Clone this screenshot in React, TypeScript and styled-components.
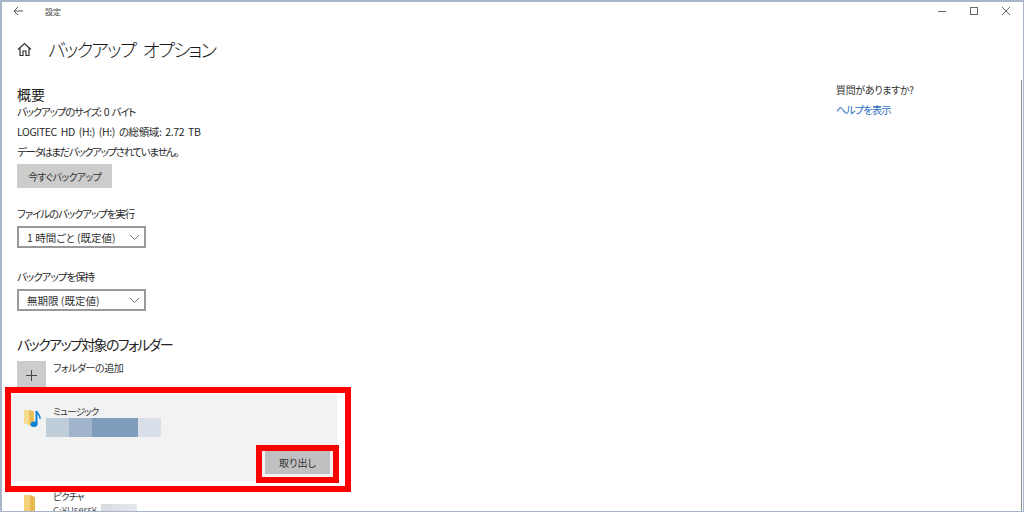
import React from 'react';
import styled, { createGlobalStyle } from 'styled-components';

const GlobalStyle = createGlobalStyle`
  html, body { margin: 0; padding: 0; background: #fff; }
  body {
    font-family: "Noto Sans CJK JP", "Open Sans", "Noto Sans", sans-serif;
    font-feature-settings: "palt";
    color: #222;
  }
  * { box-sizing: border-box; }
`;

const Window = styled.div`
  position: relative;
  width: 1024px;
  height: 512px;
  overflow: hidden;
  background: #fff;
  border: 1px solid #a9b6c9;
  border-left-width: 2px;
  border-top-width: 2px;
`;
const TitleBar = styled.div`
  display: flex;
  align-items: center;
  height: 18px;
  padding-left: 11px;
`;
const BackButton = styled.div`
  display: flex;
  width: 32px;
`;
const TitleText = styled.span`
  font-size: 8px;
  color: #444;
`;
const WindowButtons = styled.div`
  display: flex;
  gap: 20px;
  margin-left: auto;
  margin-right: 11px;
`;
const Body = styled.div`
  display: flex;
  justify-content: space-between;
`;
const Main = styled.div`
  width: 360px;
  padding: 13px 0 0 15px;
`;
const PageHeader = styled.div`
  display: flex;
  align-items: center;
  height: 32px;
  gap: 16px;
`;
const PageTitle = styled.h1`
  margin: 0;
  font-size: 18.6px;
  font-weight: 300;
  line-height: 32px;
  letter-spacing: -1.8px;
  word-spacing: 5px;
  color: #1a1a1a;
`;
const SectionTitle = styled.h2<{ $top: number; $spacing?: number }>`
  margin: ${(p) => p.$top}px 0 0;
  font-size: 14px;
  font-weight: 400;
  line-height: 20px;
  letter-spacing: ${(p) => p.$spacing ?? 0}px;
`;
const Line = styled.p<{ $top?: number; $spacing?: number }>`
  margin: ${(p) => p.$top ?? 0}px 0 0;
  font-size: 10.5px;
  line-height: 16px;
  letter-spacing: ${(p) => p.$spacing ?? 0}px;
  word-spacing: 2px;
  color: #2a2a2a;
`;
const ActionButton = styled.div`
  display: flex;
  align-items: center;
  justify-content: center;
  width: 95px;
  height: 24px;
  margin-top: 4px;
  background: #ccc;
  font-size: 10px;
  letter-spacing: -0.7px;
  color: #333;
`;
const Select = styled.div`
  display: flex;
  align-items: center;
  justify-content: space-between;
  width: 129px;
  height: 22px;
  margin-top: 4px;
  padding: 0 4px 0 8px;
  border: 2px solid #999;
  font-size: 10.5px;
  color: #333;
`;
const AddRow = styled.div`
  display: flex;
  gap: 7px;
  margin-top: 7px;
`;
const AddTile = styled.div`
  display: flex;
  align-items: center;
  justify-content: center;
  width: 29px;
  height: 29px;
  background: #ccc;
`;
const AddLabel = styled.span`
  font-size: 10px;
  line-height: 14px;
  letter-spacing: -0.5px;
  color: #333;
`;
const FolderCard = styled.div`
  position: relative;
  width: 326px;
  height: 86px;
  margin: 5px 0 0 -6px;
  background: #f2f2f2;
  padding: 9px 0 0 12px;
`;
const FolderRow = styled.div`
  display: flex;
  gap: 8px;
`;
const FolderIconBox = styled.div`
  flex: none;
  width: 22px;
  padding-top: 4px;
`;
const FolderName = styled.div`
  font-size: 9.5px;
  line-height: 14px;
  letter-spacing: -0.8px;
  color: #333;
`;
const BlurRow = styled.div`
  display: flex;
  height: 19px;
  margin-left: -7px;
`;
const BlurCell = styled.div<{ $w: number; $c: string }>`
  width: ${(p) => p.$w}px;
  background: ${(p) => p.$c};
`;
const RemoveButton = styled.div`
  position: absolute;
  right: 7px;
  bottom: 7px;
  display: flex;
  align-items: center;
  justify-content: center;
  width: 65px;
  height: 24px;
  background: #c0c0c0;
  font-size: 10px;
  color: #333;
`;
const NextRow = styled.div`
  display: flex;
  gap: 8px;
  margin: 8px 0 0 6px;
`;
const NextPath = styled.div`
  position: relative;
  font-size: 9.5px;
  line-height: 14px;
  color: #555;
  white-space: nowrap;
`;
const PathBlur = styled.div`
  position: absolute;
  left: 48px;
  top: 1px;
  width: 36px;
  height: 14px;
  background: linear-gradient(90deg, #d8dbe0, #e4e8ee);
`;
const Aside = styled.aside`
  width: 187px;
  padding-top: 62px;
`;
const HelpTitle = styled.div`
  font-size: 10px;
  line-height: 16px;
  letter-spacing: -0.3px;
  color: #333;
`;
const HelpLink = styled.div`
  margin-top: 4px;
  font-size: 10.5px;
  line-height: 16px;
  letter-spacing: -1px;
  color: #2a6fc0;
`;
const ScrollLine = styled.div`
  position: absolute;
  top: 78px;
  right: 1px;
  bottom: 0;
  width: 1px;
  background: #8a8a8a;
`;
const Highlight = styled.div<{ $l: number; $t: number; $w: number; $h: number; $b: number }>`
  position: absolute;
  left: ${(p) => p.$l}px;
  top: ${(p) => p.$t}px;
  width: ${(p) => p.$w}px;
  height: ${(p) => p.$h}px;
  border: ${(p) => p.$b}px solid #f00;
`;

const Chevron = () => (
  <svg width="11" height="7" viewBox="0 0 11 7" fill="none" stroke="#777" strokeWidth="1">
    <path d="M1 1l4.500 4.500L10 1" />
  </svg>
);

const MusicFolder = () => (
  <svg width="20" height="22" viewBox="0 0 20 22">
    <path d="M1 2h5l1 1v14l-6-1.500z" fill="#f6dc8f" />
    <path d="M6 2l5 1.500v16L6 17z" fill="#eabf57" />
    <path d="M13.500 3v13" stroke="#0a84d8" strokeWidth="2" fill="none" />
    <path d="M13.500 3c.5 3 4.500 4 3.500 8" stroke="#0a84d8" strokeWidth="1.600" fill="none" />
    <ellipse cx="11" cy="16.300" rx="3.500" ry="2.700" fill="#0a84d8" />
  </svg>
);

const PlainFolder = () => (
  <svg width="14" height="20" viewBox="0 0 14 20">
    <path d="M1 2h6l1 1v17H1z" fill="#f3d27a" />
    <path d="M7 2l5 2v16H7z" fill="#e7b94f" />
  </svg>
);

export default function App() {
  return (
    <Window>
      <GlobalStyle />
      <TitleBar>
        <BackButton>
          <svg width="11" height="10" viewBox="0 0 11 10" fill="none" stroke="#555" strokeWidth="1">
            <path d="M10 5H1M5 1L1 5l4 4" />
          </svg>
        </BackButton>
        <TitleText>設定</TitleText>
        <WindowButtons>
          <svg width="12" height="12" viewBox="0 0 12 12" stroke="#666" fill="none">
            <path d="M2 6.500h8" />
          </svg>
          <svg width="12" height="12" viewBox="0 0 12 12" stroke="#666" fill="none">
            <rect x="2.500" y="2.500" width="7" height="7" />
          </svg>
          <svg width="12" height="12" viewBox="0 0 12 12" stroke="#666" fill="none">
            <path d="M2 2l8 8M10 2l-8 8" />
          </svg>
        </WindowButtons>
      </TitleBar>
      <Body>
        <Main>
          <PageHeader>
            <svg width="15" height="15" viewBox="0 0 15 15" fill="none" stroke="#333" strokeWidth="1.200">
              <path d="M1 7.500L7.500 1.500 14 7.500M3 6v7.500h3V9h3v4.500h3V6" />
            </svg>
            <PageTitle>バックアップ オプション</PageTitle>
          </PageHeader>
          <SectionTitle $top={19}>概要</SectionTitle>
          <Line $spacing={-1.2}>バックアップのサイズ: 0 バイト</Line>
          <Line $top={4} $spacing={-0.4}>LOGITEC HD (H:) (H:) の総領域: 2.72 TB</Line>
          <Line $top={4} $spacing={-1.4}>データはまだバックアップされていません。</Line>
          <ActionButton>今すぐバックアップ</ActionButton>
          <Line $top={18} $spacing={-1.1}>ファイルのバックアップを実行</Line>
          <Select>
            1 時間ごと (既定値)
            <Chevron />
          </Select>
          <Line $top={21} $spacing={-1}>バックアップを保持</Line>
          <Select>
            無期限 (既定値)
            <Chevron />
          </Select>
          <SectionTitle $top={23} $spacing={-1.6}>バックアップ対象のフォルダー</SectionTitle>
          <AddRow>
            <AddTile>
              <svg width="13" height="13" viewBox="0 0 13 13" stroke="#444">
                <path d="M6.500 1v11M1 6.500h11" />
              </svg>
            </AddTile>
            <AddLabel>フォルダーの追加</AddLabel>
          </AddRow>
          <FolderCard>
            <FolderRow>
              <FolderIconBox>
                <MusicFolder />
              </FolderIconBox>
              <div>
                <FolderName>ミュージック</FolderName>
                <BlurRow>
                  <BlurCell $w={23} $c="#c0ceda" />
                  <BlurCell $w={23} $c="#a0b4cb" />
                  <BlurCell $w={46} $c="#7f9dbb" />
                  <BlurCell $w={23} $c="#d9dfe8" />
                </BlurRow>
              </div>
            </FolderRow>
            <RemoveButton>取り出し</RemoveButton>
          </FolderCard>
          <NextRow>
            <FolderIconBox>
              <PlainFolder />
            </FolderIconBox>
            <div>
              <FolderName>ピクチャ</FolderName>
              <NextPath>
                C:¥Users¥
                <PathBlur />
              </NextPath>
            </div>
          </NextRow>
        </Main>
        <Aside>
          <HelpTitle>質問がありますか?</HelpTitle>
          <HelpLink>ヘルプを表示</HelpLink>
        </Aside>
      </Body>
      <ScrollLine />
      <Highlight $l={3} $t={385} $w={346} $h={105} $b={6} />
      <Highlight $l={254} $t={443} $w={83} $h={38} $b={6} />
    </Window>
  );
}
